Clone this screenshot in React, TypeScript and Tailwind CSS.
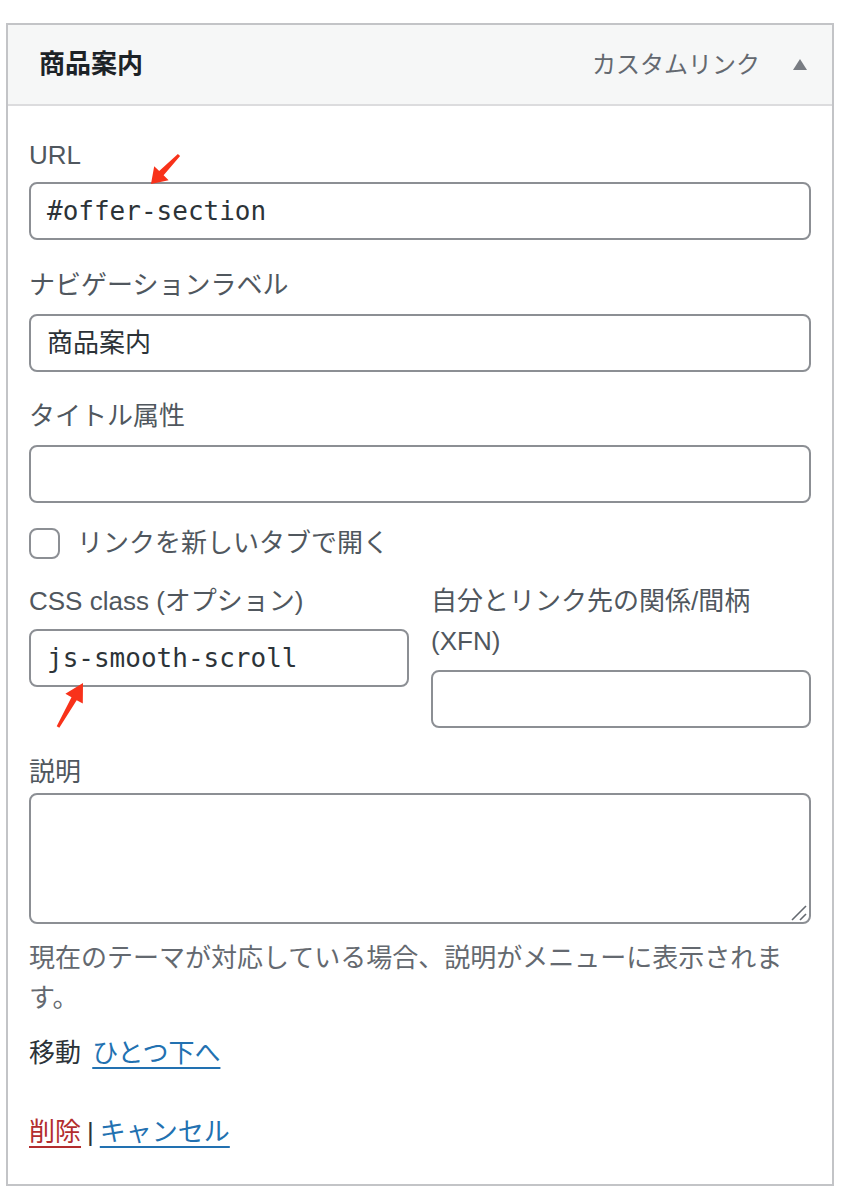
const sans = "font-['Liberation_Sans','Noto_Sans_CJK_JP',sans-serif]";
const mono = "font-['DejaVu_Sans_Mono','Noto_Sans_CJK_JP',monospace]";

function Field({ value = "", className = "" }: { value?: string; className?: string }) {
  return (
    <div
      className={`flex h-[58px] items-center rounded-[8px] border-2 border-[#8c8f94] bg-white px-[16px] text-[26px] text-[#2c3338] ${mono} ${className}`}
    >
      {value}
    </div>
  );
}

function Arrows() {
  return (
    <svg
      className="pointer-events-none absolute left-0 top-0"
      width="848"
      height="1198"
      viewBox="0 0 848 1198"
    >
      <polygon
        fill="#f8321a"
        points="151,184 168.6,180.2 163.6,175.3 180.1,156 177.9,154 159.2,171.1 154.2,166.3"
      />
      <polygon
        fill="#f8321a"
        points="83,683 82.8,703.6 76.7,700.2 59.3,727.7 56.7,726.3 71.5,697.2 65.4,693.8"
      />
    </svg>
  );
}

export default function App() {
  return (
    <div className={`relative h-[1198px] w-[848px] bg-white pt-[23px] ${sans}`}>
      <div className="ml-[6px] w-[828px] border-2 border-[#c3c4c7] bg-white">
        {/* header */}
        <div className="flex h-[81px] items-center justify-between border-b-2 border-[#dcdcde] bg-[#f6f7f7] pl-[31px] pr-[25px]">
          <span className="text-[26px] font-bold text-[#1d2327]">商品案内</span>
          <div className="flex items-center gap-[33px]">
            <span className="text-[24px] text-[#646970]">カスタムリンク</span>
            <svg width="14" height="11" viewBox="0 0 14 11">
              <polygon points="7,0 14,11 0,11" fill="#787c82" />
            </svg>
          </div>
        </div>

        {/* settings */}
        <div className="px-[21px] pb-[32px] pt-[29px] text-[26px] leading-[40px] text-[#50575e]">
          <div>URL</div>
          <Field value="#offer-section" className="mt-[7px]" />

          <div className="mt-[25px]">ナビゲーションラベル</div>
          <Field value="商品案内" className={`mt-[9px] ${sans}`} />

          <div className="mt-[24px]">タイトル属性</div>
          <Field className="mt-[9px]" />

          <div className="mt-[20px] flex h-[40px] items-center">
            <div className="h-[31px] w-[31px] rounded-[8px] border-2 border-[#8c8f94] bg-white" />
            <span className="ml-[17px]">リンクを新しいタブで開く</span>
          </div>

          <div className="mt-[18px] grid grid-cols-2 gap-[22px]">
            <div>
              <div>CSS class (オプション)</div>
              <Field value="js-smooth-scroll" className="mt-[8px]" />
            </div>
            <div>
              <div>自分とリンク先の関係/間柄 (XFN)</div>
              <Field className="mt-[9px]" />
            </div>
          </div>

          <div className="mt-[24px]">説明</div>
          <div className="relative mt-[1px] h-[131px] rounded-[8px] border-2 border-[#8c8f94] bg-white">
            <svg className="absolute bottom-[1px] right-[2px]" width="16" height="16" viewBox="0 0 16 16">
              <line x1="1" y1="15" x2="15" y2="1" stroke="#646970" strokeWidth="1.6" />
              <line x1="9" y1="15" x2="15" y2="9" stroke="#646970" strokeWidth="1.6" />
            </svg>
          </div>

          <p className="mt-[14px] text-[#646970]">
            現在のテーマが対応している場合、説明がメニューに表示されます。
          </p>

          <div className="mt-[15px] text-[#2c3338]">
            移動{" "}
            <a className="ml-[4px] text-[#2271b1] underline underline-offset-[5px]">ひとつ下へ</a>
          </div>

          <div className="mt-[39px] text-[#2c3338]">
            <a className="text-[#b32d2e] underline underline-offset-[5px]">削除</a>
            <span className="mx-[6px]">|</span>
            <a className="text-[#2271b1] underline underline-offset-[5px]">キャンセル</a>
          </div>
        </div>
      </div>
      <Arrows />
    </div>
  );
}
